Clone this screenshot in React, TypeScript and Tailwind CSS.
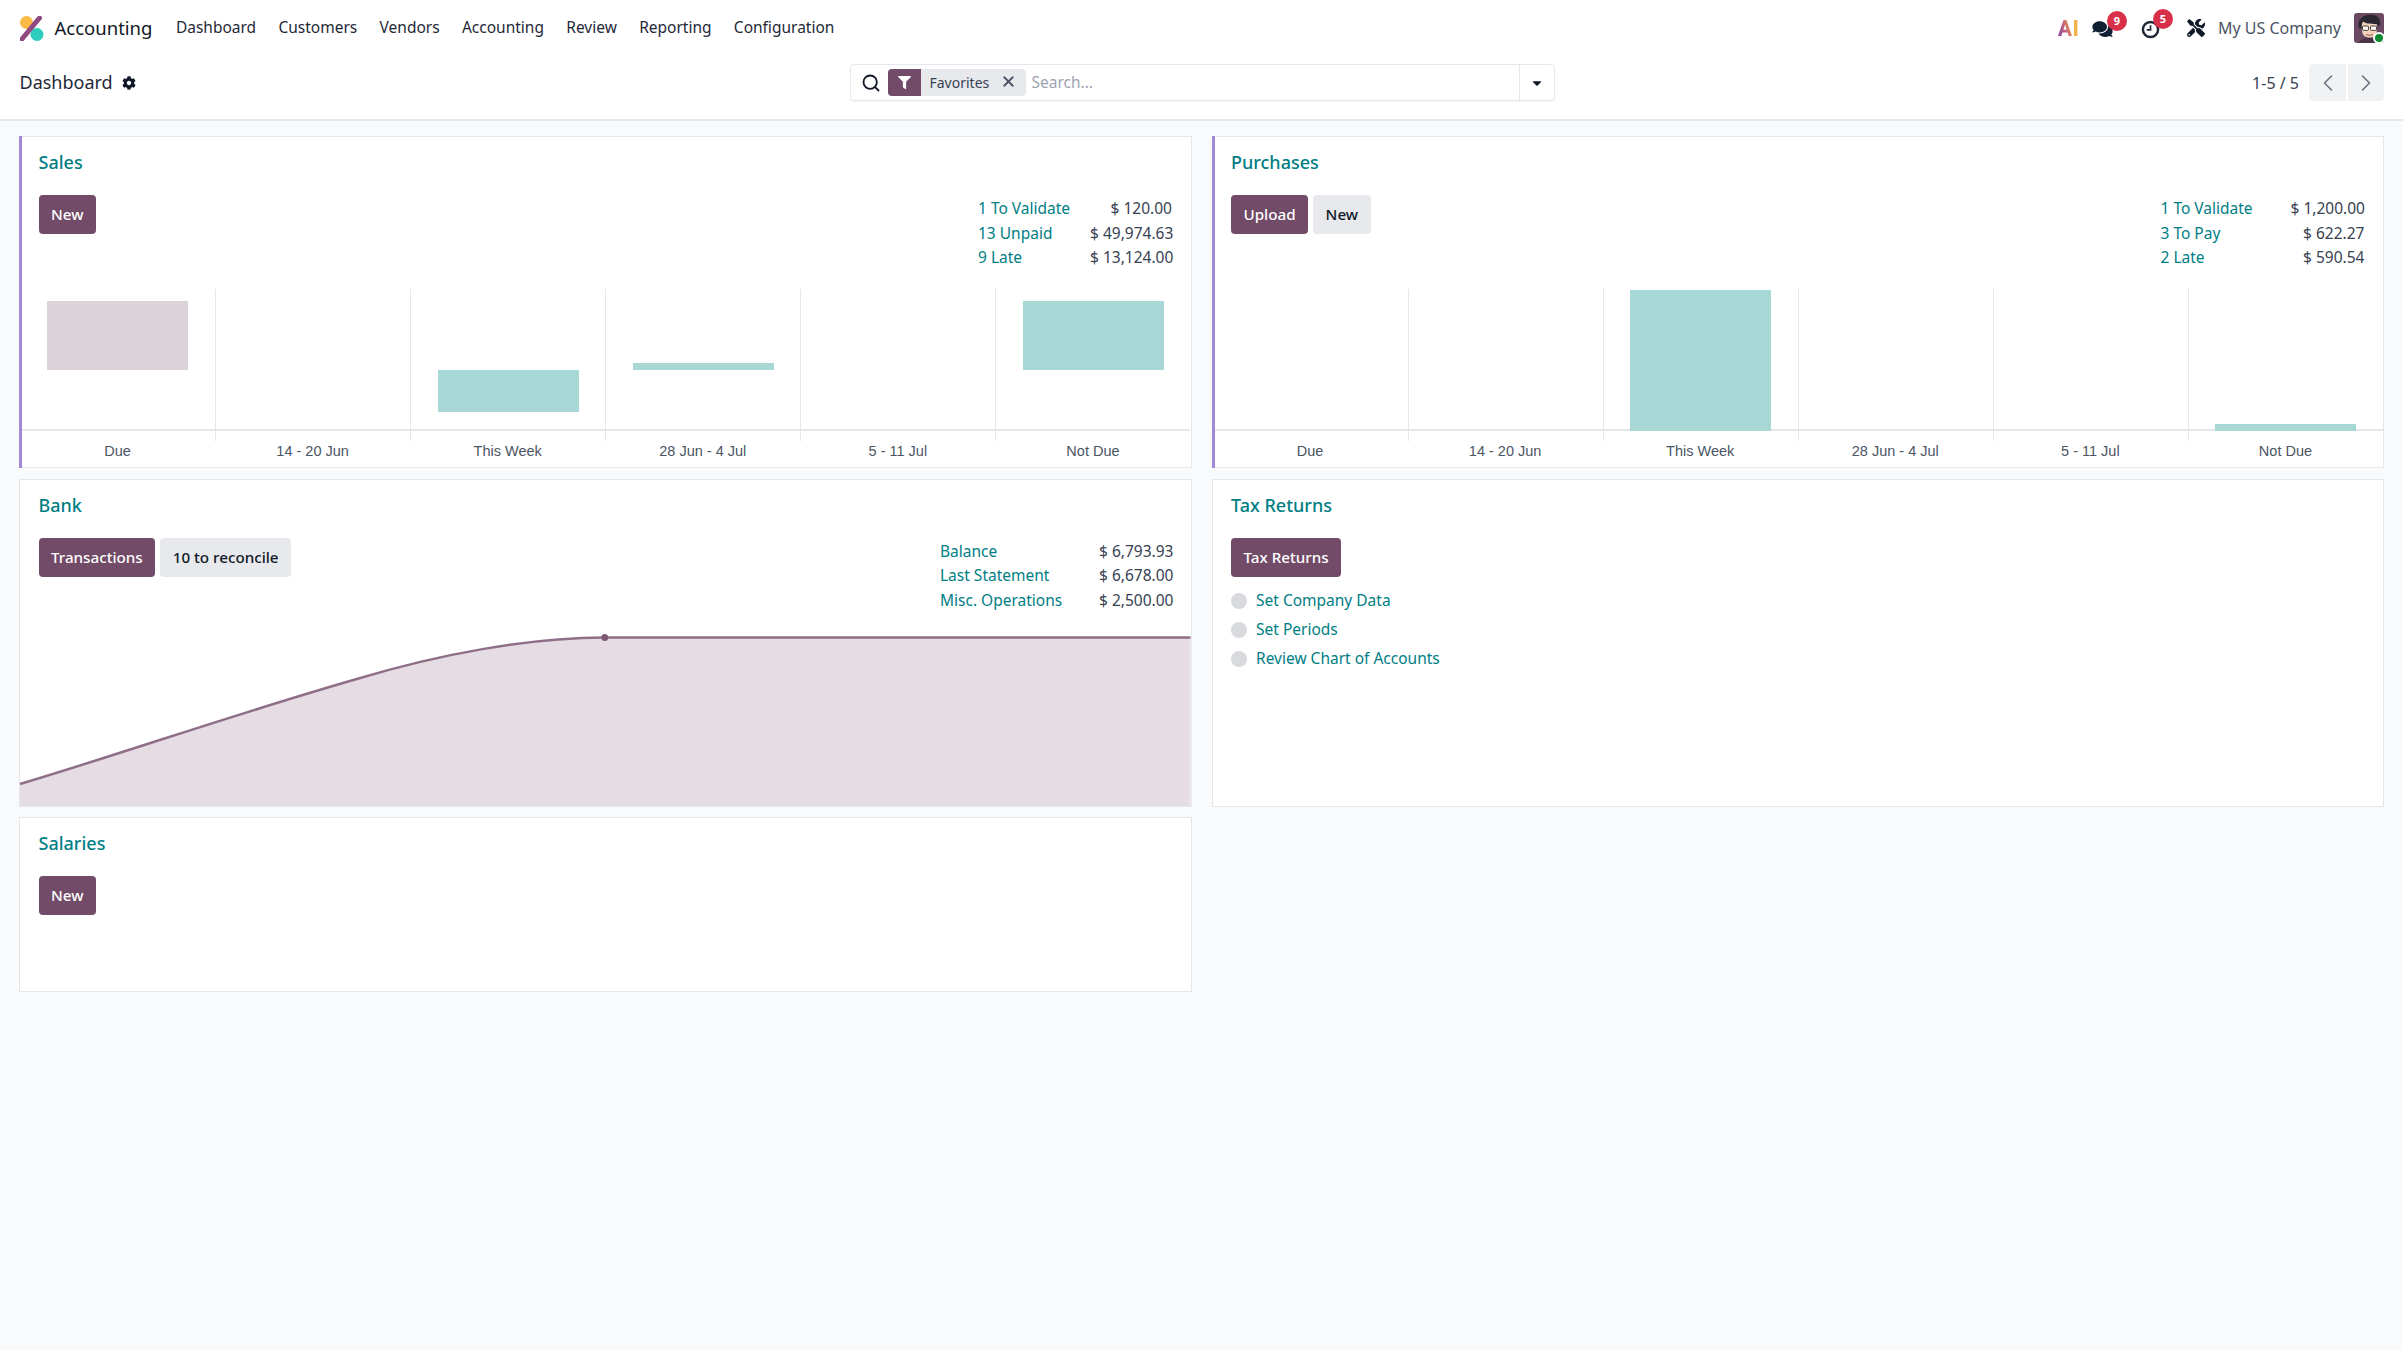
import React from "react";
import { ChevronLeft, ChevronRight, Search, X } from "lucide-react";
import { FaCog, FaFilter, FaCaretDown, FaComments, FaTools } from "react-icons/fa";

const menu = ["Dashboard", "Customers", "Vendors", "Accounting", "Review", "Reporting", "Configuration"];

const Logo = () => (
  <svg viewBox="0 0 24 25" className="w-[24px] h-[25px] shrink-0">
    <circle cx="6.5" cy="6.5" r="6.5" fill="#fbb945" />
    <circle cx="17" cy="18.5" r="6.5" fill="#2ccdbd" />
    <path d="M2 23 L19.5 2" stroke="#8f4a82" strokeWidth="5" strokeLinecap="round" />
  </svg>
);

const AiIcon = () => (
  <svg viewBox="0 0 20 16" className="w-[20px] h-[16px]">
    <defs>
      <linearGradient id="aiGrad" x1="0" y1="0.8" x2="1" y2="0.4">
        <stop offset="0" stopColor="#8e4a9e" />
        <stop offset="0.5" stopColor="#c2607c" />
        <stop offset="1" stopColor="#eda24a" />
      </linearGradient>
    </defs>
    <path d="M0 16 L5.5 0 H8.5 L14 16 H10.6 L9.6 12.6 H4.4 L3.4 16 Z M5.4 9.8 H8.6 L7 4.6 Z" fill="url(#aiGrad)" fillRule="evenodd" />
    <rect x="16" y="0" width="3.4" height="16" fill="#f1b24a" />
  </svg>
);

const ClockIcon = () => (
  <svg viewBox="0 0 20 20" className="w-[19px] h-[19px]" fill="none" stroke="#1f2937" strokeWidth="2.6">
    <circle cx="10" cy="10" r="8" />
    <path d="M10 5.5 V10.5 H6" strokeWidth="1.8" />
  </svg>
);

const Avatar = () => (
  <svg viewBox="0 0 30 30" className="w-[30px] h-[30px] rounded-[3px]">
    <rect width="30" height="30" fill="#6a4a63" />
    <path d="M5 30 C6 26 10 25 15 25 C21 25 25 26 26 30 Z" fill="#4a3346" />
    <path d="M7 12 C7 6 22 6 23 13 L22.5 20 C21 26 10 26 8.5 20 Z" fill="#f2d2b8" />
    <path d="M5 15 C2 5 12 1 18 2 C25 2 28 8 25 14 L23 11 C19 11 12 11 9 8.5 C8 10 8 12 7.5 16 Z" fill="#2b2730" />
    <rect x="8.5" y="13" width="6" height="4.4" rx="1" fill="#fff" fillOpacity="0.75" stroke="#333" strokeWidth="0.9" />
    <rect x="16.5" y="13" width="6" height="4.4" rx="1" fill="#fff" fillOpacity="0.75" stroke="#333" strokeWidth="0.9" />
    <path d="M12 21.5 C14 22.5 17 22.5 19 21.5" stroke="#8a4b3a" strokeWidth="0.9" fill="none" />
  </svg>
);

const Badge = ({ n, className }: { n: number; className: string }) => (
  <span
    className={`absolute w-[20px] h-[20px] rounded-full bg-[#d9304a] text-white text-[11px] font-bold flex items-center justify-center ${className}`}
  >
    {n}
  </span>
);

const TopBar = () => (
  <nav className="h-[56px] flex items-center pl-[19.5px] pr-[19px] text-[#374151]">
    <Logo />
    <span className="ml-[11px] text-[18.5px] text-[#111827]">Accounting</span>
    <div className="ml-[23.5px] flex items-center gap-[22.3px] text-[15.5px]">
      {menu.map((m) => (
        <span key={m} className="text-[#1f2937]">
          {m}
        </span>
      ))}
    </div>
    <div className="ml-auto flex items-center">
      <AiIcon />
      <div className="relative ml-[14px] mt-[2px]">
        <FaComments className="w-[21px] h-[18px] text-[#111f33]" />
        <Badge n={9} className="-top-[9px] left-[15px]" />
      </div>
      <div className="relative ml-[28px] mt-[3px]">
        <ClockIcon />
        <Badge n={5} className="-top-[11px] left-[12px]" />
      </div>
      <FaTools className="ml-[27px] w-[18px] h-[18px] text-[#111827]" />
      <span className="ml-[13px] text-[16px] text-[#4b5563]">My US Company</span>
      <div className="relative ml-[13px]">
        <Avatar />
        <span className="absolute -right-[1px] -bottom-[1px] w-[12px] h-[12px] rounded-full bg-[#0d8a2f] border-2 border-white" />
      </div>
    </div>
  </nav>
);

const ControlPanel = () => (
  <div className="h-[65px] pb-[10px] border-b-2 border-[#e5e7eb] flex items-center pl-[19.5px] pr-[19px]">
    <div className="w-[830px] flex items-center">
      <span className="text-[18px] text-[#1f2937]">Dashboard</span>
      <FaCog className="ml-[9px] w-[14px] h-[14px] text-[#111827]" />
    </div>
    <div className="w-[705px] h-[37px] border border-[#e5e7eb] rounded-[4px] flex items-center shadow-[0_1px_1px_rgba(0,0,0,0.04)]">
      <Search className="ml-[10px] w-[20px] h-[20px] text-[#111827]" strokeWidth={2.2} />
      <div className="ml-[7px] h-[27px] w-[138px] flex items-center rounded-[4px] bg-[#e7e9ed] overflow-hidden">
        <span className="w-[33px] h-full bg-[#714b67] flex items-center justify-center">
          <FaFilter className="w-[13px] h-[13px] text-white" />
        </span>
        <span className="ml-[9px] text-[14px] text-[#374151]">Favorites</span>
        <X className="ml-[11px] w-[17px] h-[17px] text-[#4b5563] -mt-[2px]" strokeWidth={2.6} />
      </div>
      <span className="ml-[6px] text-[15.5px] text-[#9ca3af]">Search...</span>
      <div className="ml-auto w-[35px] h-full border-l border-[#e5e7eb] flex items-center justify-center">
        <FaCaretDown className="w-[14px] h-[14px] text-[#111827]" />
      </div>
    </div>
    <div className="ml-auto flex items-center">
      <span className="text-[16px] text-[#374151]">1-5 / 5</span>
      <div className="ml-[10px] flex gap-[2px]">
        <span className="w-[37px] h-[37px] rounded-l-[4px] bg-[#f1f2f4] flex items-center justify-center">
          <ChevronLeft className="w-[28px] h-[28px] text-[#6b7280]" strokeWidth={1.4} />
        </span>
        <span className="w-[36px] h-[37px] rounded-r-[4px] bg-[#f1f2f4] flex items-center justify-center">
          <ChevronRight className="w-[28px] h-[28px] text-[#6b7280]" strokeWidth={1.4} />
        </span>
      </div>
    </div>
  </div>
);

const Btn = ({ children, secondary }: { children: React.ReactNode; secondary?: boolean }) => (
  <span
    className={
      secondary
        ? "h-[39px] px-[12.5px] rounded-[4px] bg-[#e7e9ed] text-[#111827] text-[15.2px] font-medium flex items-center"
        : "h-[39px] px-[12.5px] rounded-[4px] bg-[#714b67] text-white text-[15.2px] font-medium flex items-center"
    }
  >
    {children}
  </span>
);

type Stat = [string, string];

const Stats = ({ rows, labelCol }: { rows: Stat[]; labelCol: string }) => (
  <div className={`grid ${labelCol} text-[15.5px] leading-[24.5px] whitespace-nowrap pt-[1px]`}>
    {rows.map(([label, value]) => (
      <React.Fragment key={label}>
        <span className="text-[#017e84]">{label}</span>
        <span className="text-right text-[#374151]">{value}</span>
      </React.Fragment>
    ))}
  </div>
);

type Col = { label: string; bar?: string };

const BarChart = ({ cols }: { cols: Col[] }) => (
  <div className="mt-auto grid grid-cols-6">
    {cols.map((c, i) => (
      <div key={c.label} className="flex flex-col">
        <div className={`h-[142px] border-b-2 border-[#e5e7eb] ${i > 0 ? "border-l" : ""}`}>
          {c.bar && <div className={c.bar} />}
        </div>
        <div className={`h-[10px] border-[#e5e7eb] ${i > 0 ? "border-l" : ""}`} />
        <div className="h-[26px] pb-[5px] flex items-center justify-center text-[14.5px] text-[#4b5563] font-['Liberation_Sans',sans-serif]">
          {c.label}
        </div>
      </div>
    ))}
  </div>
);

const Card = ({
  title,
  accent,
  className,
  children,
}: {
  title: string;
  accent?: boolean;
  className: string;
  children: React.ReactNode;
}) => (
  <section className={`relative bg-white border border-[#e5e7eb] flex flex-col ${className}`}>
    {accent && <span className="absolute -left-px -top-px -bottom-px w-[3px] bg-[#a488d8]" />}
    <h2 className="mt-[11px] ml-[18.5px] text-[18px] leading-[28px] font-medium text-[#017e84]">{title}</h2>
    {children}
  </section>
);

export default function App() {
  return (
    <div className="min-h-[1351px] bg-[#f9fafb] font-['Noto_Sans',sans-serif]">
      <header className="bg-white">
        <TopBar />
        <ControlPanel />
      </header>
      <main className="grid grid-cols-2 gap-x-[20px] gap-y-[10.5px] px-[19px] pt-[15px]">
        <Card title="Sales" accent className="h-[332px]">
          <div className="mt-[19px] mx-[18.5px] flex justify-between">
            <Btn>New</Btn>
            <Stats
              labelCol="grid-cols-[112px_82px]"
              rows={[
                ["1 To Validate", "$ 120.00"],
                ["13 Unpaid", "$ 49,974.63"],
                ["9 Late", "$ 13,124.00"],
              ]}
            />
          </div>
          <BarChart
            cols={[
              { label: "Due", bar: "mt-[12px] mx-auto w-[141px] h-[69px] bg-[#dcd2da]" },
              { label: "14 - 20 Jun" },
              { label: "This Week", bar: "mt-[81px] mx-auto w-[141px] h-[42px] bg-[#a8d8d5]" },
              { label: "28 Jun - 4 Jul", bar: "mt-[74px] mx-auto w-[141px] h-[7px] bg-[#a8d8d5]" },
              { label: "5 - 11 Jul" },
              { label: "Not Due", bar: "mt-[12px] mx-auto w-[141px] h-[69px] bg-[#a8d8d5]" },
            ]}
          />
        </Card>

        <Card title="Purchases" accent className="h-[332px]">
          <div className="mt-[19px] mx-[18.5px] flex justify-between">
            <div className="flex gap-[5px]">
              <Btn>Upload</Btn>
              <Btn secondary>New</Btn>
            </div>
            <Stats
              labelCol="grid-cols-[130px_74px]"
              rows={[
                ["1 To Validate", "$ 1,200.00"],
                ["3 To Pay", "$ 622.27"],
                ["2 Late", "$ 590.54"],
              ]}
            />
          </div>
          <BarChart
            cols={[
              { label: "Due" },
              { label: "14 - 20 Jun" },
              { label: "This Week", bar: "mt-[1px] mx-auto w-[141px] h-[141px] bg-[#a8d8d5]" },
              { label: "28 Jun - 4 Jul" },
              { label: "5 - 11 Jul" },
              { label: "Not Due", bar: "mt-[135px] mx-auto w-[141px] h-[7px] bg-[#a8d8d5]" },
            ]}
          />
        </Card>

        <Card title="Bank" className="h-[328px]">
          <div className="mt-[19px] mx-[18.5px] flex justify-between">
            <div className="flex gap-[5px]">
              <Btn>Transactions</Btn>
              <Btn secondary>10 to reconcile</Btn>
            </div>
            <Stats
              labelCol="grid-cols-[159px_73px]"
              rows={[
                ["Balance", "$ 6,793.93"],
                ["Last Statement", "$ 6,678.00"],
                ["Misc. Operations", "$ 2,500.00"],
              ]}
            />
          </div>
          <svg viewBox="0 0 1171 171" preserveAspectRatio="none" className="mt-auto w-full h-[171px] block overflow-visible">
            <path d="M0 149 C 104 118 218 78 337 44 C 420 19 510 2.5 585 2.5 L 1171 2.5 L 1171 171 L 0 171 Z" fill="#e6dde4" />
            <path d="M0 149 C 104 118 218 78 337 44 C 420 19 510 2.5 585 2.5 L 1171 2.5" fill="none" stroke="#8f6e88" strokeWidth="2.5" />
            <circle cx="585" cy="2.5" r="3.5" fill="#7e5a76" />
          </svg>
        </Card>

        <Card title="Tax Returns" className="h-[328px]">
          <div className="mt-[19px] mx-[18.5px] flex">
            <Btn>Tax Returns</Btn>
          </div>
          <ul className="mt-[9.5px] mx-[18.5px] text-[15.5px] text-[#017e84]">
            {["Set Company Data", "Set Periods", "Review Chart of Accounts"].map((t) => (
              <li key={t} className="h-[29px] flex items-center gap-[9px]">
                <span className="w-[16px] h-[16px] rounded-full bg-[#d8dadd]" />
                {t}
              </li>
            ))}
          </ul>
        </Card>

        <Card title="Salaries" className="h-[175px]">
          <div className="mt-[19px] mx-[18.5px] flex">
            <Btn>New</Btn>
          </div>
        </Card>
      </main>
    </div>
  );
}
